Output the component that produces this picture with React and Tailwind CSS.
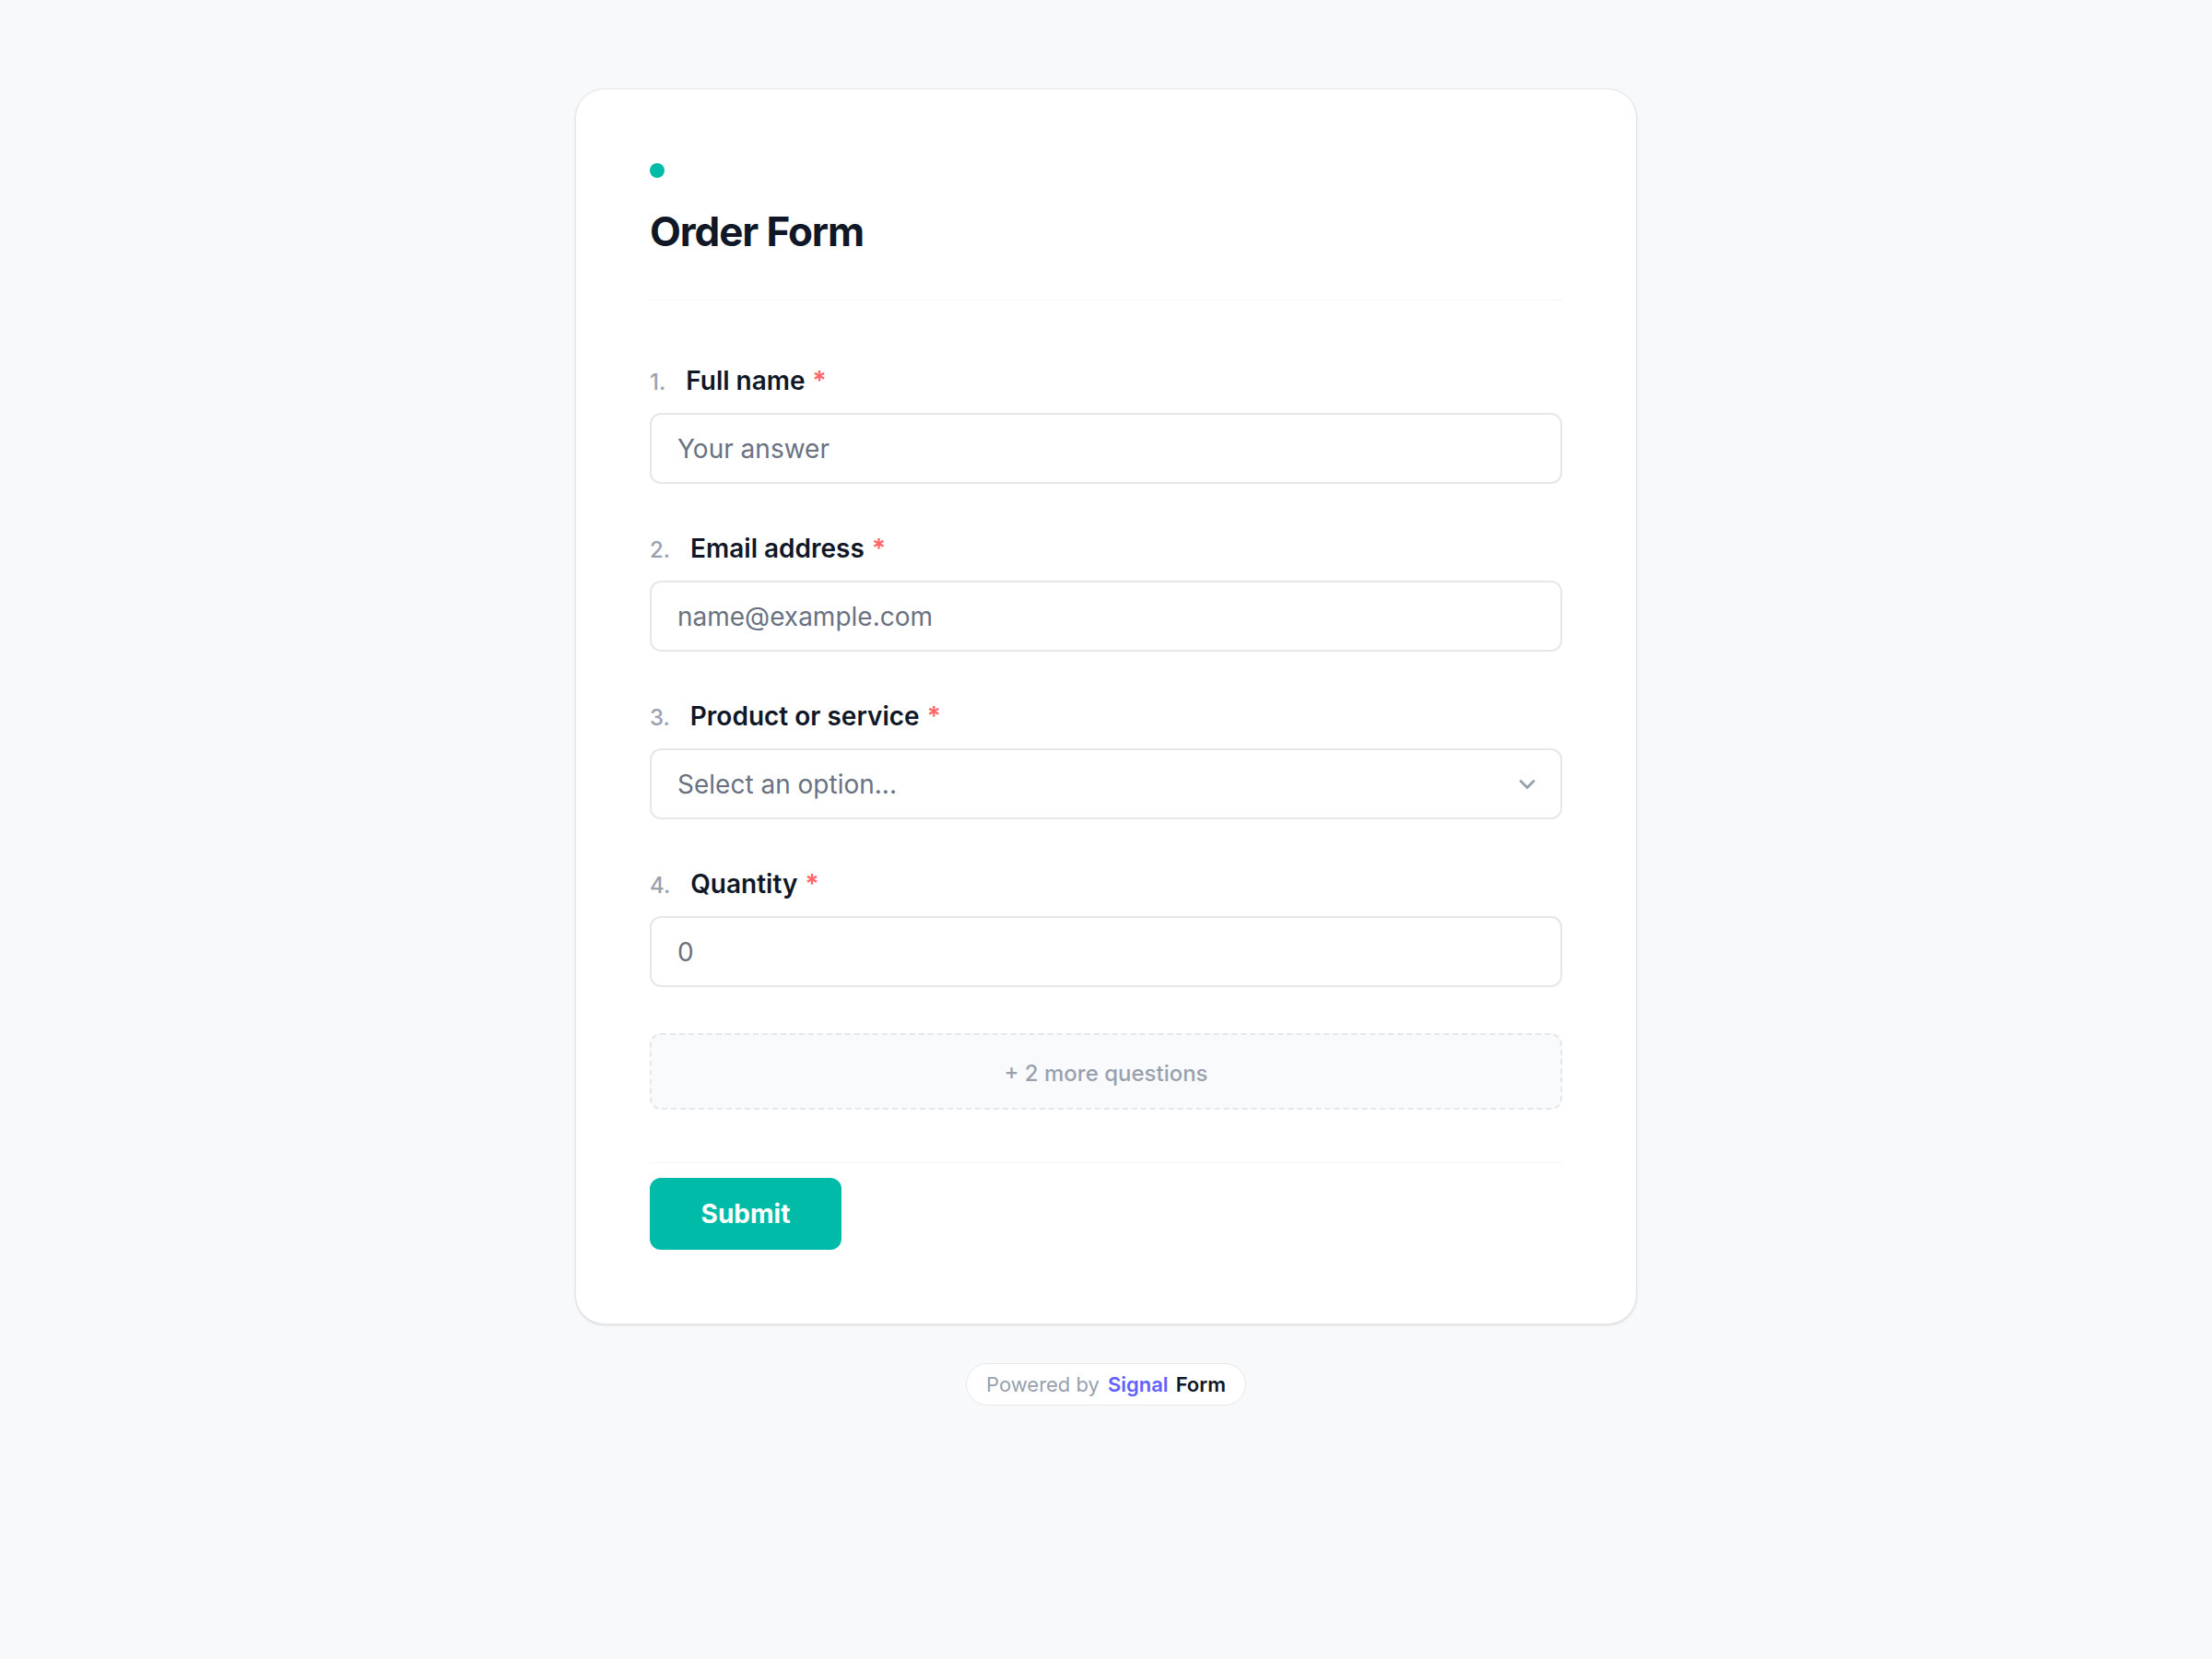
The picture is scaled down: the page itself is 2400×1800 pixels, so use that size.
import React from 'react';
import { ChevronDown } from 'lucide-react';

const questions = [
  { n: '1.', label: 'Full name', type: 'text', placeholder: 'Your answer' },
  { n: '2.', label: 'Email address', type: 'email', placeholder: 'name@example.com' },
  { n: '3.', label: 'Product or service', type: 'select', placeholder: 'Select an option...' },
  { n: '4.', label: 'Quantity', type: 'number', placeholder: '0' },
];

const Question = ({ n, label, type, placeholder }) => (
  <div>
    <div className="flex items-baseline h-10 mb-[15px]">
      <span className="text-2xl font-medium text-gray-400 mr-[22px]">{n}</span>
      <span className="text-[28px] leading-10 font-semibold text-gray-900">{label}</span>
      <span className="ml-[8px] text-[28px] leading-10 font-semibold text-red-400">*</span>
    </div>
    {type === 'select' ? (
      <div className="h-[77px] w-full border-2 border-gray-200 rounded-xl pl-7 pr-[22px] flex items-center justify-between bg-white">
        <span className="text-[28px] text-gray-500">{placeholder}</span>
        <ChevronDown size={28} strokeWidth={2.5} className="text-gray-400" />
      </div>
    ) : (
      <input
        type={type}
        placeholder={placeholder}
        className="h-[77px] w-full border-2 border-gray-200 rounded-xl px-7 text-[28px] text-gray-900 placeholder:text-gray-500 bg-white outline-none"
      />
    )}
  </div>
);

export default function App() {
  return (
    <div className="min-h-screen bg-[#f8f9fb] font-['Inter',sans-serif] pt-24 pb-24 flex flex-col items-center">
      <div className="w-[1152px] bg-white border border-gray-200 rounded-[32px] shadow-sm px-20 pt-20 pb-20">
        <div className="pb-[52px] border-b border-gray-100">
          <div className="w-4 h-4 rounded-full bg-teal-500 mb-[36px]" />
          <h1 className="text-[44px] leading-none font-bold tracking-tight text-gray-900">Order Form</h1>
        </div>

        <div className="mt-[67px] flex flex-col gap-[50px]">
          {questions.map((q) => (
            <Question key={q.n} {...q} />
          ))}
          <div className="h-[83px] border-2 border-dashed border-gray-200 bg-gray-50 rounded-xl flex items-center justify-center pt-1">
            <span className="text-2xl font-medium text-gray-400">+ 2 more questions</span>
          </div>
        </div>

        <div className="mt-[57px] border-t border-gray-100 pt-4">
          <button className="w-[208px] h-[78px] rounded-xl bg-teal-500 text-white text-[28px] font-bold">
            Submit
          </button>
        </div>
      </div>

      <div className="mt-[42px] bg-white border border-gray-200 rounded-full px-[21px] py-[8px] flex items-baseline gap-[9px] text-[22px] leading-7">
        <span className="text-gray-400">Powered by</span>
        <span className="font-semibold text-indigo-500">Signal</span>
        <span className="font-semibold text-gray-900 -ml-[1px]">Form</span>
      </div>
    </div>
  );
}
